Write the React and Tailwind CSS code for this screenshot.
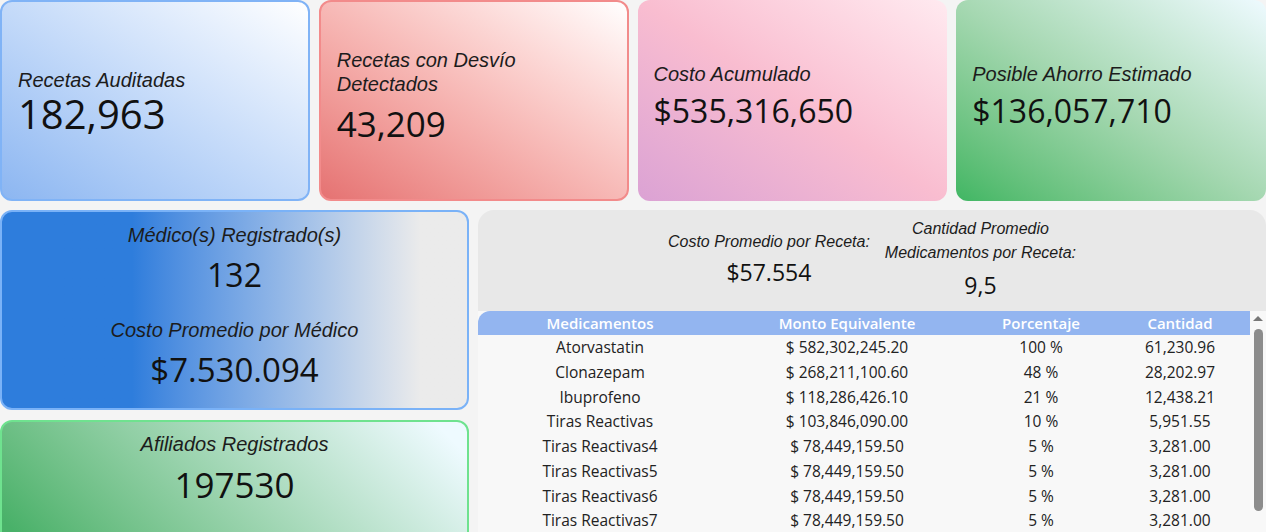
import React from 'react';

const label = "font-['Liberation_Sans',Arial,sans-serif] italic text-[20px] leading-[23px] text-[#1c1c1c]";
const num = "font-['Open_Sans',sans-serif] text-[#111]";

const rows = [
    ['Atorvastatin', '$ 582,302,245.20', '100 %', '61,230.96'],
    ['Clonazepam', '$ 268,211,100.60', '48 %', '28,202.97'],
    ['Ibuprofeno', '$ 118,286,426.10', '21 %', '12,438.21'],
    ['Tiras Reactivas', '$ 103,846,090.00', '10 %', '5,951.55'],
    ['Tiras Reactivas4', '$ 78,449,159.50', '5 %', '3,281.00'],
    ['Tiras Reactivas5', '$ 78,449,159.50', '5 %', '3,281.00'],
    ['Tiras Reactivas6', '$ 78,449,159.50', '5 %', '3,281.00'],
    ['Tiras Reactivas7', '$ 78,449,159.50', '5 %', '3,281.00'],
];

const cols = 'grid grid-cols-[244px_250px_138px_1fr] text-center';

export default function App() {
    return (
        <div className="h-[532px] w-[1266px] overflow-hidden bg-[#f4f4f4]">
            {/* Top stats */}
            <div className="grid grid-cols-4 gap-[9px] h-[201px]">
                <div className="flex flex-col justify-center px-4 pt-[4px] rounded-[12px] border-2 border-[#80b3f6] bg-linear-to-tr from-[#8cb6f1] to-white">
                    <div className={label}>Recetas Auditadas</div>
                    <div className={`${num} text-[40px] leading-[44px]`}>182,963</div>
                </div>
                <div className="flex flex-col justify-center px-4 pb-[10px] rounded-[12px] border-2 border-[#f28b8b] bg-linear-to-tr from-[#e57272] to-white">
                    <div className={`${label} leading-[24px]`}>Recetas con Desvío Detectados</div>
                    <div className={`${num} text-[35px] leading-[40px] mt-[8px]`}>43,209</div>
                </div>
                <div className="flex flex-col justify-center px-4 pb-[8px] rounded-[12px] bg-linear-to-tr from-[#dba2d4] via-[#f9bdd0] to-[#ffeaf0]">
                    <div className={label}>Costo Acumulado</div>
                    <div className={`${num} text-[32px] leading-[38px] mt-[6px]`}>$535,316,650</div>
                </div>
                <div className="flex flex-col justify-center px-4 pb-[8px] rounded-[12px] bg-linear-to-tr from-[#3fb663] via-[#a6d8b2] to-[#eefaff]">
                    <div className={label}>Posible Ahorro Estimado</div>
                    <div className={`${num} text-[32px] leading-[38px] mt-[6px]`}>$136,057,710</div>
                </div>
            </div>

            <div className="grid grid-cols-[469px_1fr] gap-[9px] mt-[9px]">
                {/* Left column */}
                <div className="flex flex-col gap-[10px]">
                    <div className="h-[200px] flex flex-col items-center pt-[12px] rounded-[12px] border-2 border-[#7ab2f7] bg-linear-to-r from-[#2e7ddc] from-[28%] to-[#ebebeb] to-[90%]">
                        <div className={label}>Médico(s) Registrado(s)</div>
                        <div className={`${num} text-[32px] leading-[36px] mt-[10px]`}>132</div>
                        <div className={`${label} mt-[26px]`}>Costo Promedio por Médico</div>
                        <div className={`${num} text-[33px] leading-[38px] mt-[9px]`}>$7.530.094</div>
                    </div>
                    <div className="h-[200px] flex flex-col items-center pt-[11px] rounded-[12px] border-2 border-[#6fe28f] bg-linear-45 from-[#49b169] from-[15%] to-[#eefaff] to-[95%]">
                        <div className={label}>Afiliados Registrados</div>
                        <div className={`${num} text-[35px] leading-[40px] mt-[9px]`}>197530</div>
                    </div>
                </div>

                {/* Right panel */}
                <div className="h-[322px] flex flex-col rounded-t-[16px] bg-[#e8e8e8] overflow-hidden">
                    <div className="h-[101px] pb-[4px] flex items-center justify-center gap-[15px] font-['Liberation_Sans',Arial,sans-serif] italic text-[16px] text-[#1c1c1c] text-center">
                        <div className="flex flex-col items-center">
                            <div className="leading-[24px]">Costo Promedio por Receta:</div>
                            <div className={`${num} not-italic text-[23px] leading-[30px] mt-[3px]`}>$57.554</div>
                        </div>
                        <div className="flex flex-col items-center">
                            <div className="leading-[24px]">Cantidad Promedio</div>
                            <div className="leading-[24px]">Medicamentos por Receta:</div>
                            <div className={`${num} not-italic text-[23px] leading-[30px] mt-[5px]`}>9,5</div>
                        </div>
                    </div>

                    <div className="flex flex-1 min-h-0 bg-[#f8f8f8]">
                        <div className="flex-1 font-['Open_Sans',sans-serif] text-[15.5px] text-[#222]">
                            <div className={`${cols} h-[24px] items-center bg-[#93b5f0] text-white font-semibold text-[15px] rounded-tl-[12px]`}>
                                <div>Medicamentos</div>
                                <div>Monto Equivalente</div>
                                <div>Porcentaje</div>
                                <div>Cantidad</div>
                            </div>
                            {rows.map((r, i) => (
                                <div key={i} className={`${cols} leading-[24.75px]`}>
                                    {r.map((c, j) => <div key={j}>{c}</div>)}
                                </div>
                            ))}
                        </div>
                        {/* scrollbar */}
                        <div className="w-[16px] flex flex-col items-center bg-[#f8f8f8]">
                            <div className="mt-[5px] w-0 h-0 border-l-[5px] border-r-[5px] border-b-[5px] border-l-transparent border-r-transparent border-b-[#777]"></div>
                            <div className="mt-[8px] w-[9px] h-[182px] rounded-full bg-[#8c8c8c]"></div>
                        </div>
                    </div>
                </div>
            </div>
        </div>
    );
}
